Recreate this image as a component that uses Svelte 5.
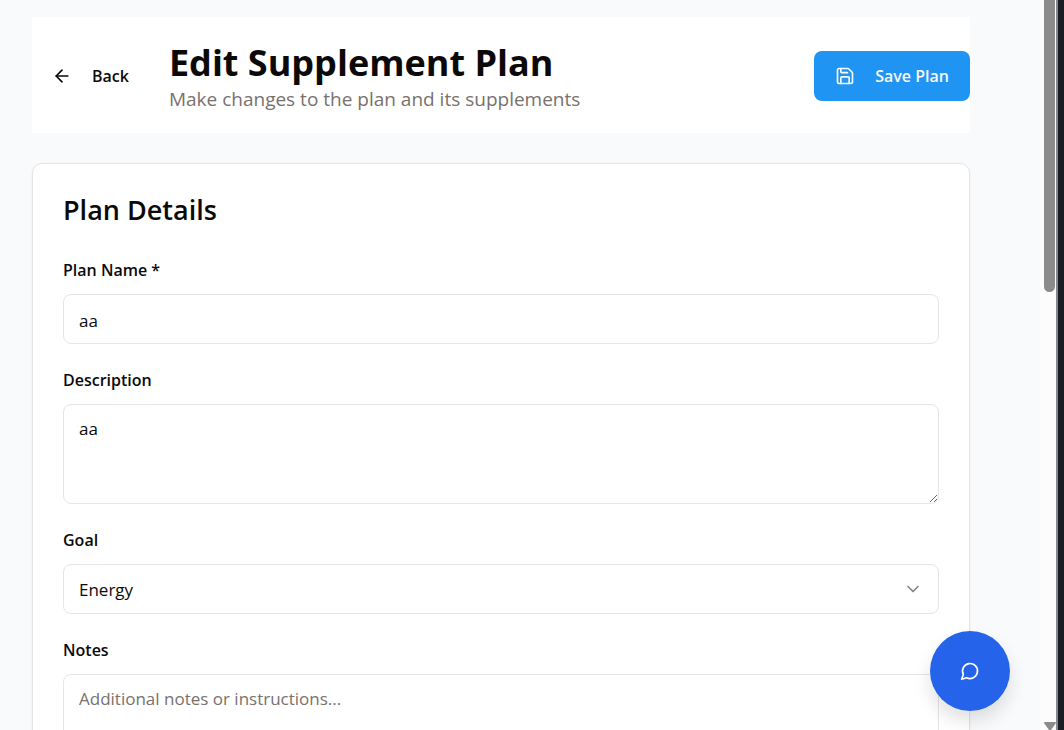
<script>
  let name = $state('aa');
  let description = $state('aa');
  let goal = $state('Energy');
  let notes = $state('');
</script>

<div class="shell">
  <main class="page">
    <header class="header">
      <button class="back" type="button">
        <svg class="icon" viewBox="0 0 24 24" aria-hidden="true">
          <path d="m12 19-7-7 7-7" />
          <path d="M19 12H5" />
        </svg>
        Back
      </button>
      <div class="heading">
        <h1>Edit Supplement Plan</h1>
        <p>Make changes to the plan and its supplements</p>
      </div>
      <button class="save" type="submit" form="plan">
        <svg class="icon" viewBox="0 0 24 24" aria-hidden="true">
          <path d="M15.2 3a2 2 0 0 1 1.4.6l3.8 3.8a2 2 0 0 1 .6 1.4V19a2 2 0 0 1-2 2H5a2 2 0 0 1-2-2V5a2 2 0 0 1 2-2z" />
          <path d="M17 21v-7a1 1 0 0 0-1-1H8a1 1 0 0 0-1 1v7" />
          <path d="M7 3v4a1 1 0 0 0 1 1h7" />
        </svg>
        Save Plan
      </button>
    </header>

    <form class="card" id="plan" onsubmit={(e) => e.preventDefault()}>
      <h2>Plan Details</h2>
      <div class="field">
        <label for="name">Plan Name *</label>
        <input id="name" type="text" bind:value={name} />
      </div>
      <div class="field">
        <label for="description">Description</label>
        <textarea id="description" bind:value={description}></textarea>
      </div>
      <div class="field">
        <label for="goal">Goal</label>
        <div class="select">
          <select id="goal" bind:value={goal}>
            <option>Energy</option>
          </select>
          <svg class="icon chevron" viewBox="0 0 24 24" aria-hidden="true">
            <path d="m6 9 6 6 6-6" />
          </svg>
        </div>
      </div>
      <div class="field">
        <label for="notes">Notes</label>
        <textarea id="notes" placeholder="Additional notes or instructions..." bind:value={notes}></textarea>
      </div>
    </form>
  </main>

  <button class="chat" type="button" aria-label="Open chat">
    <svg class="icon" viewBox="0 0 24 24" aria-hidden="true">
      <path d="M7.9 20A9 9 0 1 0 4 16.1L2 22Z" />
    </svg>
  </button>

  <div class="scrollbar" aria-hidden="true">
    <div class="thumb"></div>
    <svg class="arrow" viewBox="0 0 12 8"><path d="M1 0h10q1 0 1 1L7 8H5L0 1q0-1 1-1z" /></svg>
  </div>
  <div class="edge" aria-hidden="true"></div>
</div>

<style>
  :global(body) {
    margin: 0;
    background: #f9fafc;
  }

  .shell,
  .shell * {
    box-sizing: border-box;
  }

  .shell {
    position: relative;
    display: flex;
    height: 100vh;
    overflow: hidden;
    background: #f9fafc;
    color: #0c0a09;
    font-family: 'Open Sans', 'Noto Sans', sans-serif;
    font-size: 17px;
    line-height: 24px;
  }

  .page {
    flex: 1;
    min-width: 0;
    overflow: hidden;
    padding: 17px 70px 0 32px;
  }

  button,
  input,
  textarea,
  select {
    font: inherit;
    color: inherit;
  }

  h1,
  h2,
  p {
    margin: 0;
  }

  .icon {
    flex: none;
    width: 20px;
    height: 20px;
    fill: none;
    stroke: currentColor;
    stroke-width: 2;
    stroke-linecap: round;
    stroke-linejoin: round;
  }

  .header {
    display: flex;
    align-items: center;
    min-height: 116px;
    margin-bottom: 30px;
    padding-top: 2px;
    background: #fff;
  }

  .back,
  .save {
    display: flex;
    align-items: center;
    justify-content: center;
    gap: 20px;
    height: 50px;
    padding: 0 20px;
    border: 0;
    border-radius: 8px;
    background: none;
    font-size: 16px;
    font-weight: 600;
    white-space: nowrap;
  }

  .save {
    min-width: 156px;
    background: #2094f3;
    color: #f8fafc;
  }

  .heading {
    flex: 1;
    min-width: 0;
    padding: 2px 20px 0;
  }

  h1 {
    font-size: 36px;
    line-height: 44px;
    font-weight: 700;
  }

  .heading p {
    color: #78716c;
    font-size: 19px;
    line-height: 28px;
  }

  .card {
    display: flex;
    flex-direction: column;
    gap: 24px;
    padding: 30px;
    border: 1px solid #e5e5e5;
    border-radius: 10px;
    background: #fff;
    box-shadow: 0 1px 3px rgba(0, 0, 0, 0.06);
  }

  h2 {
    margin-bottom: 8px;
    font-size: 27px;
    line-height: 32px;
    font-weight: 600;
  }

  .field {
    display: flex;
    flex-direction: column;
    gap: 12px;
  }

  label {
    font-size: 16px;
    font-weight: 600;
  }

  input,
  textarea,
  select {
    display: block;
    width: 100%;
    margin: 0;
    padding: 0 15px;
    border: 1px solid #e5e5e5;
    border-radius: 8px;
    background: #fff;
    outline: 0;
  }

  input,
  select {
    height: 50px;
    padding-top: 2px;
  }

  select {
    appearance: none;
  }

  textarea {
    height: 100px;
    padding-top: 12px;
    resize: vertical;
  }

  textarea::placeholder {
    color: #78716c;
    opacity: 1;
  }

  .select {
    display: grid;
    align-items: center;
  }

  .select > * {
    grid-area: 1 / 1;
  }

  .chevron {
    justify-self: end;
    margin-right: 16px;
    color: #868380;
    pointer-events: none;
  }

  .chat {
    position: absolute;
    right: 54px;
    bottom: 19px;
    display: grid;
    place-items: center;
    width: 80px;
    height: 80px;
    padding: 0;
    border: 0;
    border-radius: 50%;
    background: #2563eb;
    color: #fff;
    box-shadow: 0 10px 18px rgba(0, 0, 0, 0.12);
  }

  .scrollbar {
    display: flex;
    flex-direction: column;
    justify-content: space-between;
    width: 16px;
    padding: 0 1px 0 4px;
    background: #fcfcfc;
  }

  .thumb {
    height: 40%;
    border-radius: 0 0 6px 6px;
    background: #8b8b8b;
  }

  .arrow {
    width: 12px;
    height: 8px;
    fill: #8b8b8b;
  }

  .edge {
    width: 8px;
    border-left: 2px solid #85888c;
    background: #1a1d26;
  }
</style>
